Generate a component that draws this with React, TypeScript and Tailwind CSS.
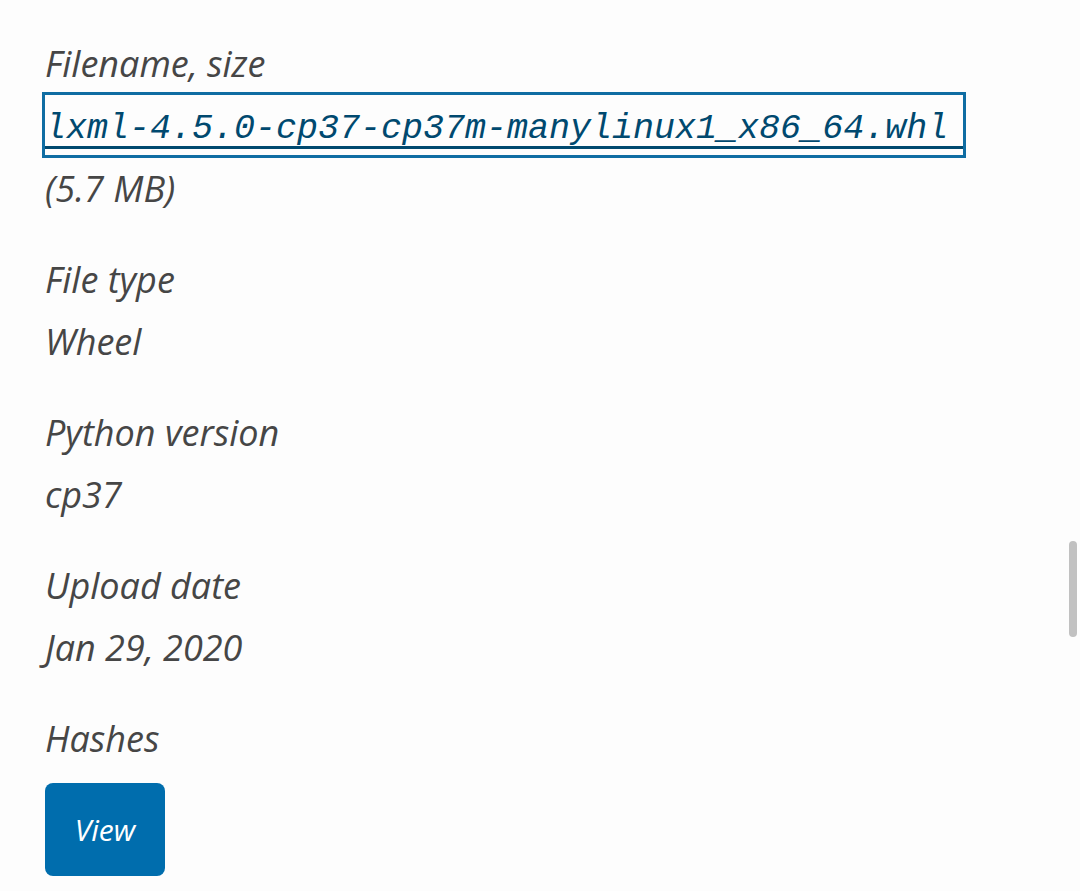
import type { ReactNode } from "react";

function Field({ label, children }: { label: string; children: ReactNode }) {
  return (
    <div>
      <dt>{label}</dt>
      <dd>{children}</dd>
    </div>
  );
}

export default function App() {
  return (
    <main className="min-h-screen bg-[#fdfdfd] px-[45px] pt-[33px] pb-[15px] font-['Open_Sans','Liberation_Sans',sans-serif] text-[36px] leading-[62px] text-[#464646] italic">
      <dl className="flex flex-col gap-[29px]">
        <Field label="Filename, size">
          <a
            href="#download"
            className="mb-[3px] block w-full max-w-[918px] pb-[6px] font-['Liberation_Mono',monospace] text-[35px] text-[#00496f] outline-[3px] outline-[#0f6da3]"
          >
            <span className="block border-b-[3px] border-[#00496f] pt-[17px] leading-[34px]">
              lxml-4.5.0-cp37-cp37m-manylinux1_x86_64.whl
            </span>
          </a>
          <span>(5.7 MB)</span>
        </Field>
        <Field label="File type">Wheel</Field>
        <Field label="Python version">cp37</Field>
        <Field label="Upload date">Jan 29, 2020</Field>
        <Field label="Hashes">
          <button
            type="button"
            className="mt-[13px] block h-[93px] min-w-[120px] rounded-lg bg-[#006dad] px-[24px] text-[30px] text-white italic"
          >
            View
          </button>
        </Field>
      </dl>
      <div className="fixed top-[541px] right-[3px] h-[96px] w-[8px] rounded-full bg-[#c1c1c1]" />
    </main>
  );
}
